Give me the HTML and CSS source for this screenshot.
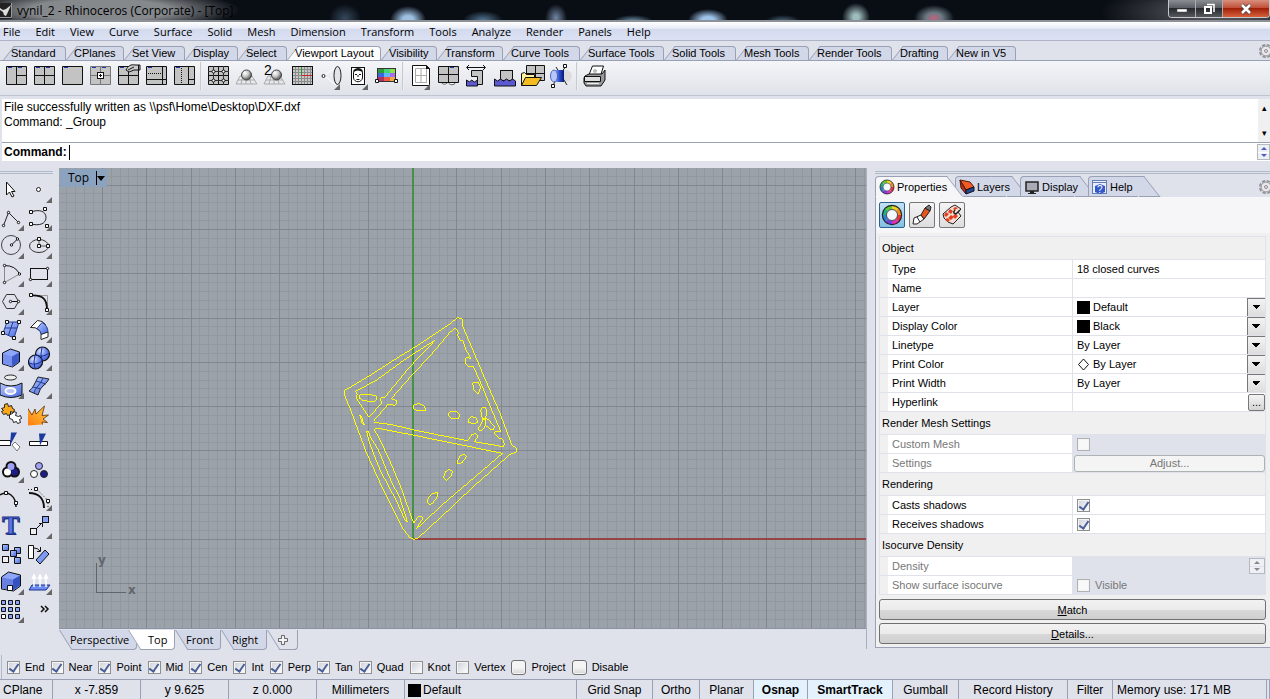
FILE: index.html
```html
<!DOCTYPE html>
<html lang="en">
<head>
  <meta charset="UTF-8">
  <title>vynil_2 - Rhinoceros (Corporate) - [Top]</title>
  <link rel="stylesheet" href="styles.css">
</head>
<body>

  <!-- Shared gradients and symbols -->
  <svg class="defs" width="0" height="0">
    <defs>
      <linearGradient id="blue" x1="0" y1="0" x2="1" y2="1"><stop offset="0" stop-color="#b9cbff"/><stop offset="1" stop-color="#4566dc"/></linearGradient>
      <radialGradient id="ball" cx=".35" cy=".3" r=".7"><stop offset="0" stop-color="#fff"/><stop offset=".5" stop-color="#c8c8c8"/><stop offset="1" stop-color="#555"/></radialGradient>
      <radialGradient id="blueball" cx=".35" cy=".3" r=".8"><stop offset="0" stop-color="#dbe5ff"/><stop offset=".5" stop-color="#6f8cf0"/><stop offset="1" stop-color="#3453c8"/></radialGradient>
      <linearGradient id="fire" x1="0" y1="1" x2="1" y2="0"><stop offset="0" stop-color="#ff7a10"/><stop offset="1" stop-color="#ffd040"/></linearGradient>
      <linearGradient id="barrel"><stop offset="0" stop-color="#b8ccff"/><stop offset=".5" stop-color="#2f52d8"/><stop offset="1" stop-color="#081a70"/></linearGradient>
    </defs>
    <symbol id="tri" viewBox="0 0 28 28"><path d="M24 22v6h-6z" fill="#666"/></symbol>
    <symbol id="wheel" viewBox="0 0 16 16">
      <g fill="none" stroke-width="3">
        <path d="M8 2.5A5.5 5.5 0 0 1 12 4" stroke="#f0d020"/>
        <path d="M12 4A5.5 5.5 0 0 1 13.5 8" stroke="#f08a20"/>
        <path d="M13.5 8A5.5 5.5 0 0 1 12 12" stroke="#e83040"/>
        <path d="M12 12A5.5 5.5 0 0 1 8 13.5" stroke="#e030b0"/>
        <path d="M8 13.5A5.5 5.5 0 0 1 4 12" stroke="#7040e0"/>
        <path d="M4 12A5.5 5.5 0 0 1 2.5 8" stroke="#3080d0"/>
        <path d="M2.5 8A5.5 5.5 0 0 1 4 4" stroke="#20b080"/>
        <path d="M4 4A5.5 5.5 0 0 1 8 2.5" stroke="#60c830"/>
      </g>
      <circle cx="8" cy="8" r="7" fill="none" stroke="#222" stroke-width=".8"/>
      <circle cx="8" cy="8" r="4" fill="#f4f8ff" stroke="#333" stroke-width=".6"/>
    </symbol>
    <symbol id="gear" viewBox="0 0 16 16">
      <circle cx="8" cy="8" r="6.3" fill="none" stroke="#8c8c90" stroke-width="1.5" stroke-dasharray="3.3 1.65"/>
      <circle cx="8" cy="8" r="5" fill="#e8e8ec" stroke="#8c8c90"/>
      <circle cx="8" cy="8" r="1.5" fill="none" stroke="#8c8c90"/>
    </symbol>
    <symbol id="panes" viewBox="0 0 28 28"><path d="M4.5 4.5h20v18h-20zM14.5 4.5v18M4.5 13.5h20" fill="#c3c3c3" stroke="#111"/><path d="M6 5.5h4M16 5.5h4" stroke="#2036a8"/></symbol>
  </svg>

  <!-- Title bar -->
  <header class="titlebar">
    <svg class="app-icon" width="12" height="16" viewBox="0 0 12 16"><rect width="12" height="16" fill="#222"/><path d="M0 5l3 2 3-1 5-4-3 7-2 4-2-1-1-3-3-2z" fill="#ddd"/><path d="M0 14.5h11.5V0" fill="none" stroke="#999"/></svg>
    <span class="title">vynil_2 - Rhinoceros (Corporate) - [Top]</span>
    <div class="window-buttons">
      <button class="win-btn" aria-label="Minimize"><svg width="12" height="12"><rect x="1" y="6" width="10" height="3" fill="#fff" stroke="#444" stroke-width=".5"/></svg></button>
      <button class="win-btn" aria-label="Restore"><svg width="12" height="12" fill="none" stroke="#fff"><path d="M4 1.5h7V9" stroke-width="1.5"/><rect x="2" y="4" width="6" height="6" stroke-width="2"/></svg></button>
      <button class="win-btn win-close" aria-label="Close"><svg width="14" height="12"><path d="M3 2l8 8M11 2l-8 8" stroke="#444" stroke-width="4"/><path d="M3 2l8 8M11 2l-8 8" stroke="#fff" stroke-width="2.500"/></svg></button>
    </div>
  </header>

  <!-- Menu -->
  <nav class="menu">
    <a href="#">File</a><a href="#">Edit</a><a href="#">View</a><a href="#">Curve</a><a href="#">Surface</a><a href="#">Solid</a><a href="#">Mesh</a><a href="#">Dimension</a><a href="#">Transform</a><a href="#">Tools</a><a href="#">Analyze</a><a href="#">Render</a><a href="#">Panels</a><a href="#">Help</a>
  </nav>

  <!-- Toolbar tabs -->
  <div class="tab-row">
    <div class="tabs">
      <button class="tab">Standard</button>
      <button class="tab">CPlanes</button>
      <button class="tab">Set View</button>
      <button class="tab">Display</button>
      <button class="tab">Select</button>
      <button class="tab active">Viewport Layout</button>
      <button class="tab">Visibility</button>
      <button class="tab">Transform</button>
      <button class="tab">Curve Tools</button>
      <button class="tab">Surface Tools</button>
      <button class="tab">Solid Tools</button>
      <button class="tab">Mesh Tools</button>
      <button class="tab">Render Tools</button>
      <button class="tab">Drafting</button>
      <button class="tab">New in V5</button>
    </div>
    <button class="gear" aria-label="Toolbar options"><svg width="16" height="16"><use href="#gear"/></svg></button>
  </div>

  <!-- Toolbar -->
  <div class="toolbar">
    <button class="tool" aria-label="3 viewports"><svg viewBox="0 0 28 28"><path d="M4.5 4.5h20v18h-20zM14.5 4.5v18M14.5 13.5h10" fill="#c3c3c3" stroke="#111"/><path d="M6 5.5h4M16 5.5h4" stroke="#2036a8"/></svg></button>
    <button class="tool" aria-label="4 viewports"><svg viewBox="0 0 28 28"><use href="#panes"/></svg></button>
    <button class="tool" aria-label="Maximize viewport"><svg viewBox="0 0 28 28"><path d="M4.5 4.5h20v18h-20z" fill="#c3c3c3" stroke="#111"/><path d="M6 5.5h4" stroke="#2036a8"/></svg></button>
    <button class="tool" aria-label="Link viewports"><svg viewBox="0 0 28 28"><path d="M4.5 4.5h20v18h-20zM14.5 4.5v18M4.5 13.5h20" fill="#c3c3c3" stroke="#777"/><path d="M6 5.5h4M16 5.5h4" stroke="#2036a8"/><rect x="11.5" y="10.5" width="6" height="6" fill="#fff" stroke="#111"/><path d="M14.5 12v3M13 13.5h3" stroke="#111"/></svg></button>
    <button class="tool" aria-label="Viewport properties"><svg viewBox="0 0 28 28"><use href="#panes"/><path d="M12 8c2-4 5-6 9-5h5v5h-6l-5 2z" fill="#ccc" stroke="#111"/><path d="M14 8l6-3M24.500 3v5" stroke="#111"/></svg></button>
    <button class="tool" aria-label="Split horizontal"><svg viewBox="0 0 28 28"><path d="M4.5 4.5h20v18h-20zM20.5 4.5v18M4.5 17.5h20" fill="#c3c3c3" stroke="#111"/><path d="M6 11.5h13" stroke="#111" stroke-dasharray="1 1"/><path d="M6 5.5h4" stroke="#2036a8"/></svg></button>
    <button class="tool" aria-label="Split vertical"><svg viewBox="0 0 28 28"><path d="M4.5 4.5h20v18h-20zM18.5 4.5v18M18.5 17.5h6" fill="#c3c3c3" stroke="#111"/><path d="M11.5 6v15" stroke="#111" stroke-dasharray="1 1"/><path d="M6 5.5h4" stroke="#2036a8"/></svg></button>
    <span class="sep"></span>
    <button class="tool" aria-label="Grid snap"><svg viewBox="0 0 28 28"><rect x="4.5" y="4.5" width="20" height="18" fill="#c3c3c3"/><path d="M4.5 4.5h20v18h-20zM14.5 4v19M4 13.5h21" fill="none" stroke="#111"/><path d="M9.5 4v19M19.5 4v19M4 9.5h21M4 18.5h21" stroke="#333"/><g fill="#fff" stroke="#111"><circle cx="9.500" cy="9.500" r="1.500"/><circle cx="19.500" cy="9.500" r="1.500"/><circle cx="9.500" cy="18.500" r="1.500"/><circle cx="19.500" cy="18.500" r="1.500"/></g></svg></button>
    <button class="tool" aria-label="Perspective match"><svg viewBox="0 0 28 28"><path d="M8 14L4 22h21l-5-8zM6 18h17M11 14l-2 8M17 14l2 8M14 14v8" fill="none" stroke="#aaa"/><circle cx="14.5" cy="13" r="5" fill="url(#ball)" stroke="#444"/></svg></button>
    <button class="tool" aria-label="Two-point perspective"><svg viewBox="0 0 28 28"><path d="M8 14L4 22h21l-5-8zM6 18h17M11 14l-2 8M17 14l2 8M14 14v8" fill="none" stroke="#aaa"/><circle cx="16.5" cy="13" r="5" fill="url(#ball)" stroke="#444"/><text x="4" y="13" font-size="14">2</text></svg></button>
    <button class="tool" aria-label="Grid"><svg viewBox="0 0 28 28"><rect x="4.5" y="4.5" width="20" height="18" fill="#c8c8c8" stroke="#111"/><path d="M7.5 5v17M10.5 5v17M13.5 5v17M16.5 5v17M19.5 5v17M22.5 5v17M5 7.5h19M5 10.5h19M5 13.5h19M5 16.5h19M5 19.5h19" stroke="#8a8a8a"/><path d="M13.5 5v8" stroke="#1a9a1a"/><path d="M13.500 13.500H24" stroke="#c22"/></svg></button>
    <button class="tool" aria-label="Camera"><svg viewBox="0 0 28 28"><path d="M8 13.5L20 5M8 13.5L20 23" stroke="#fff"/><circle cx="7.5" cy="14" r="1.5" fill="#fff" stroke="#222"/><ellipse cx="21.5" cy="13.5" rx="3.5" ry="9" fill="#e4e4e8" stroke="#222"/><use href="#tri"/></svg></button>
    <button class="tool" aria-label="Picture"><svg viewBox="0 0 28 28"><rect x="7.5" y="5.500" width="13" height="17" fill="#fff" stroke="#111"/><path d="M9.500 11c0-5 9-5 9 0v5c-1 5-8 5-9 0z" fill="none" stroke="#111"/><path d="M9.500 10q4-3 9 0V8q-4-4-9 0z" fill="#111"/><path d="M11 12.500h2M15 12.500h2M14 13v2M12.500 17.500h3" stroke="#111"/><use href="#tri"/></svg></button>
    <button class="tool" aria-label="Wallpaper"><svg viewBox="0 0 28 28"><rect x="5" y="6" width="19" height="14" fill="#333"/><path d="M6 7h6v4H6z" fill="#2e9b3c"/><path d="M12 7h6v4h-6z" fill="#45d47a"/><path d="M18 7h5v4h-5z" fill="#8be04c"/><path d="M6 11h6v4H6z" fill="#3d68dc"/><path d="M12 11h6v4h-6z" fill="#66b5fa"/><path d="M18 11h5v4h-5z" fill="#a56ef0"/><path d="M6 15h6v4H6z" fill="#b03060"/><path d="M12 15h6v4h-6z" fill="#ef5a48"/><path d="M18 15h5v4h-5z" fill="#f0a840"/><path d="M3.5 17.5h3v3h-3zM22.5 17.5h3v3h-3z" fill="#fff" stroke="#111"/></svg></button>
    <span class="sep"></span>
    <button class="tool" aria-label="New layout"><svg viewBox="0 0 28 28"><path d="M6.5 3.5h14l3 3v17h-17z" fill="#fff" stroke="#111"/><path d="M9.5 6.5h11v14h-11zM15 6.5v14M9.5 13.5h11" fill="none" stroke="#aaa"/><path d="M20 3v4h4" fill="#111"/><use href="#tri"/></svg></button>
    <button class="tool" aria-label="Copy layout"><svg viewBox="0 0 28 28"><path d="M7 19c1 5 6 3 7 1 1 3 6 4 8 0" fill="#fff" stroke="#555"/><path d="M4.5 4.5h20v16h-20zM14.5 4.5v16M4.5 12.5h20" fill="#c3c3c3" stroke="#111"/><path d="M16 5.5h4" stroke="#2036a8"/></svg></button>
    <button class="tool" aria-label="Scale detail"><svg viewBox="0 0 28 28"><path d="M9.5 8.5h11v14h-5v-8h-6z" fill="#c3c3c3" stroke="#111"/><path d="M5 5.500h18M7 3L4.500 5.500 7 8M21 3l2.500 2.500L21 8" fill="none" stroke="#111"/><path d="M4.5 24v-6l3 2 2-2 3 2 3-2v6z" fill="#5b58d0" stroke="#111"/></svg></button>
    <button class="tool" aria-label="Lock detail"><svg viewBox="0 0 28 28"><rect x="10.5" y="8.5" width="12" height="10" fill="#c3c3c3" stroke="#111"/><path d="M4.5 24v-7l3 2 3-2 3 2 3-2 3 2 3-2 3 2v5z" fill="#5b58d0" stroke="#111"/></svg></button>
    <button class="tool" aria-label="Open layout"><svg viewBox="0 0 28 28"><path d="M8.5 3.5h18v15h-18zM17.5 3.5v15M8.5 11.5h18" fill="#c3c3c3" stroke="#111"/><path d="M3.5 23.5v-12l3-1 2 2h8v3" fill="#fff0a0" stroke="#111"/><path d="M3.5 23.5l4-8h16l-5 8z" fill="#f5bc22" stroke="#111"/></svg></button>
    <button class="tool" aria-label="Detail view"><svg viewBox="0 0 28 28"><circle cx="20" cy="14" r="6" fill="#ddd"/><path d="M7 23L20 4M10 5l11 18" stroke="#222"/><path d="M8 8h10v12H8z" fill="url(#barrel)"/><ellipse cx="8" cy="14" rx="3.5" ry="6" fill="#b4c6fa" stroke="#5366ac"/><path d="M17.5 2.5h3v3h-3zM5.5 22.5h3v3h-3z" fill="#fff" stroke="#111"/></svg></button>
    <span class="sep"></span>
    <button class="tool" aria-label="Print"><svg viewBox="0 0 28 28"><path d="M8.5 14l4-10h11l-3 10z" fill="#fff" stroke="#111"/><path d="M5 14l4-2h13l3-4v10l-4 6H6l-2-3v-5z" fill="#999" stroke="#111"/><path d="M4.5 14.5h16v5h-16z" fill="#ddd" stroke="#111"/><path d="M7 21.5h12" stroke="#eee"/><circle cx="15" cy="9" r="2" fill="#bbb"/></svg></button>
  </div>

  <!-- Command history and prompt -->
  <section class="command">
    <div class="history">
      <div class="history-text"><p>File successfully written as \\psf\Home\Desktop\DXF.dxf</p><p>Command: _Group</p></div>
      <div class="scroll"><span>&#9652;</span><span>&#9662;</span></div>
    </div>
    <div class="prompt">
      <label for="cmd">Command:</label>
      <span class="caret"></span>
      <input id="cmd" type="text">
      <div class="spin"><button aria-label="Up"></button><button class="down" aria-label="Down"></button></div>
    </div>
  </section>

  <main class="workspace">

    <!-- Side tools -->
    <aside class="side">
      <div class="grip"></div>
      <div class="side-tools">
        <button class="tool" aria-label="Select"><svg viewBox="0 0 28 28"><path d="M6.5 7v13l3-3 2.5 5 2-1-2.5-4.5H15z" fill="#fff" stroke="#111"/></svg></button>
        <button class="tool" aria-label="Point"><svg viewBox="0 0 28 28"><circle cx="10.5" cy="14.5" r="2" fill="#fff" stroke="#222"/><use href="#tri"/></svg></button>

        <button class="tool" aria-label="Polyline"><svg viewBox="0 0 28 28"><path d="M3.5 22.5L8.5 9.5l10 10" fill="none" stroke="#222"/><g fill="#fff" stroke="#111"><circle cx="3.5" cy="22.5" r="1.2"/><circle cx="8.5" cy="9.5" r="1.2"/><circle cx="18.5" cy="19.5" r="1.2"/></g><use href="#tri"/></svg></button>
        <button class="tool" aria-label="Curve"><svg viewBox="0 0 28 28"><path d="M3 9C11 6 18 8 18 14.5S11 23 3 21" fill="none" stroke="#222"/><use href="#tri"/><path d="M1.5 7.5h3v3h-3zM15.5 4.5h3v3h-3zM1.5 19.5h3v3h-3zM17.5 21.5h3v3h-3z" fill="#fff" stroke="#111"/></svg></button>

        <button class="tool" aria-label="Circle"><svg viewBox="0 0 28 28"><circle cx="11" cy="14" r="9.5" fill="none" stroke="#444"/><path d="M11.5 14l6-6" stroke="#111"/><g fill="#fff" stroke="#111"><circle cx="11.5" cy="14" r="1.2"/><circle cx="17.5" cy="8" r="1.2"/></g><use href="#tri"/></svg></button>
        <button class="tool" aria-label="Ellipse"><svg viewBox="0 0 28 28"><ellipse cx="11" cy="15" rx="9.5" ry="6.5" fill="none" stroke="#333"/><path d="M11 8v7h9" fill="none" stroke="#555"/><path d="M9.5 6.5h3v3h-3zM9.5 13.5h3v3h-3zM18.5 13.5h3v3h-3z" fill="#fff" stroke="#111"/><use href="#tri"/></svg></button>

        <button class="tool" aria-label="Arc"><svg viewBox="0 0 28 28"><path d="M4.5 6.5v17l15-8.5" fill="none" stroke="#888"/><path d="M4.5 6.5q11 0 15 8.5" fill="none" stroke="#111"/><g fill="#fff" stroke="#111"><circle cx="4.5" cy="6.5" r="1.2"/><circle cx="4.5" cy="23.5" r="1.2"/><circle cx="19.5" cy="15" r="1.2"/></g><use href="#tri"/></svg></button>
        <button class="tool" aria-label="Rectangle"><svg viewBox="0 0 28 28"><rect x="2.5" y="9.5" width="17" height="11" fill="none" stroke="#111"/><g fill="#fff" stroke="#111"><circle cx="19.5" cy="9.5" r="1.2"/><circle cx="2.5" cy="20.5" r="1.2"/></g><use href="#tri"/></svg></button>

        <button class="tool" aria-label="Polygon"><svg viewBox="0 0 28 28"><path d="M2.5 14.5l4-7h8l4 7-4 7h-8z" fill="none" stroke="#333"/><path d="M10.5 14.5h8" stroke="#111"/><g fill="#fff" stroke="#111"><circle cx="10.5" cy="14.5" r="1.2"/><circle cx="18.5" cy="14.5" r="1.2"/></g><use href="#tri"/></svg></button>
        <button class="tool" aria-label="Fillet"><svg viewBox="0 0 28 28"><path d="M3 8.5h16.5V23" fill="none" stroke="#999"/><path d="M3 8.500C15 8 19 12 19 23" fill="none" stroke="#111" stroke-width="1.800"/><use href="#tri"/><path d="M1.500 6.500h3v3h-3zM17.500 21.500h3v3h-3z" fill="#fff" stroke="#111"/></svg></button>

        <button class="tool" aria-label="Surface"><svg viewBox="0 0 28 28"><path d="M7 7h12l-5 16L3 18z" fill="url(#blue)" stroke="#223a90"/><path d="M13 7L8.5 20M5 13h12" stroke="#223a90"/><path d="M5.5 5.5h3v3h-3zM17.5 5.5h3v3h-3zM1.5 16.5h3v3h-3zM12.5 21.5h3v3h-3z" fill="#fff" stroke="#111"/><use href="#tri"/></svg></button>
        <button class="tool" aria-label="Sweep"><svg viewBox="0 0 28 28"><path d="M2.500 12.500l7-7q5 0 8 4l-6 6q-4-4-9-3z" fill="#fff" stroke="#222"/><path d="M14 7.500q6 3 6 10l-7 2q0-4-4-6z" fill="url(#blue)" stroke="#223a90"/><path d="M20 17v5l-7 2.500v-5z" fill="#fff" stroke="#222"/><use href="#tri"/></svg></button>

        <button class="tool" aria-label="Box"><svg viewBox="0 0 28 28"><path d="M2.5 10l8-4 9 3v10l-7 5-10-3z" fill="#8da6fa" stroke="#111"/><path d="M3 10.500l9 3v10l-9-3z" fill="#7891ee"/><path d="M12 13.500l7-4v9.500l-7 4.500z" fill="#3d5bc8"/><use href="#tri"/></svg></button>
        <button class="tool" aria-label="Spheres"><svg viewBox="0 0 28 28"><g fill="url(#blueball)" stroke="#111" stroke-width="1.2"><circle cx="14.5" cy="11" r="7"/><circle cx="7.5" cy="19" r="7"/></g><path d="M8 12q7 3 13-2M14 4q-2 7 0 14M1 20q7 3 13-2M7 12q-2 7 0 14" fill="none" stroke="#1c318c"/><use href="#tri"/></svg></button>

        <button class="tool" aria-label="Project"><svg viewBox="0 0 28 28"><ellipse cx="10.5" cy="6.5" rx="6" ry="2.5" fill="#eee" stroke="#222"/><path d="M0 12q11 6 22 0v12q-11 5-22 0z" fill="url(#blue)" stroke="#111"/><ellipse cx="10.5" cy="20" rx="5" ry="3" fill="#b8c6f8" stroke="#fff" stroke-width="2"/><use href="#tri"/></svg></button>
        <button class="tool" aria-label="Unroll"><svg viewBox="0 0 28 28"><path d="M10 6l11 2q-3 5-6 7t-5 9L1 20q3-2 5-6t4-8z" fill="url(#blue)" stroke="#222"/><path d="M15 7q-2 5-5 8t-4 7M8 10l10 3M5 16l8 2" fill="none" stroke="#223a90"/><use href="#tri"/></svg></button>

        <button class="tool" aria-label="Join"><svg viewBox="0 0 28 28"><path d="M9.500 15.500l3-1 1-2 3 1-1 3 3 1 2-1 1 3-2 1 1 3-3 1-1-2-3 1-1-3-3-1z" fill="#fff" stroke="#222"/><path d="M1.500 9.500l3-1V5.500l3-1 1 3 3-1 1 3 2 1-1 3-3-1v3l-3 1-1-2-3 1-2-3 2-1z" fill="#f9a81c" stroke="#222"/></svg></button>
        <button class="tool" aria-label="Explode"><svg viewBox="0 0 28 28"><path d="M-.500 26.500V9l4.500 7 3-6 1 5 8.500-8-2.500 9.500 6.500-.500-5.500 4 4.500 3.500-5.500-.500.500 2.500z" fill="url(#fire)"/><path d="M-.500 9l4.500 7 3-6 1 5 8.500-8-2.500 9.500 6.500-.500-5.500 4 4.500 3.500-5.500-.500.500 2.500" fill="none" stroke="#5a2a00" stroke-width=".8"/></svg></button>

        <button class="tool" aria-label="Trim"><svg viewBox="0 0 28 28"><path d="M-1 13.500h11.500v5H-1z" fill="#fff" stroke="#111"/><path d="M11 5.500h6l-7 13z" fill="#1d3b9c"/><path d="M15 15l5 5-3 4-5-6z" fill="#fff" stroke="#777"/></svg></button>
        <button class="tool" aria-label="Split"><svg viewBox="0 0 28 28"><path d="M1.5 14.5h18v4h-18z" fill="#fff" stroke="#111"/><path d="M11 6.500h7l-6 12z" fill="#1d3b9c"/></svg></button>

        <button class="tool" aria-label="Group"><svg viewBox="0 0 28 28"><g stroke="#111" stroke-width="3"><circle cx="11" cy="11.5" r="4"/><circle cx="7.5" cy="17" r="4"/><circle cx="14.5" cy="17" r="4"/></g><circle cx="7.5" cy="17" r="3.5" fill="#fff"/><circle cx="14.5" cy="17" r="3.5" fill="#1c1c86"/><circle cx="11" cy="11.5" r="3.5" fill="#a0a0f4"/><use href="#tri"/></svg></button>
        <button class="tool" aria-label="Ungroup"><svg viewBox="0 0 28 28"><g stroke="#222"><circle cx="11" cy="11" r="3.5" fill="#a0a0f4"/><circle cx="6" cy="19" r="3.5" fill="#fff"/><circle cx="16" cy="19" r="3.5" fill="#1c1c86"/></g></svg></button>

        <button class="tool" aria-label="Edit points"><svg viewBox="0 0 28 28"><path d="M0 12Q6 8 11 12t5 12" fill="none" stroke="#111" stroke-width="1.5"/><path d="M4.5 8.5h3v3h-3zM14.5 18.5h3v3h-3z" fill="#fff" stroke="#111"/></svg></button>
        <button class="tool" aria-label="Control points"><svg viewBox="0 0 28 28"><path d="M1 10c9 0 15 5 15 15" fill="none" stroke="#111" stroke-width="2"/><path d="M0 6.5h9l11 11v8" fill="none" stroke="#111" stroke-dasharray="1 2"/><use href="#tri"/><path d="M6.5 4.5h3v3h-3zM18.5 16.5h3v3h-3z" fill="#fff" stroke="#111"/></svg></button>

        <button class="tool" aria-label="Text"><svg viewBox="0 0 28 28"><text class="t-icon" x="3" y="24" font-size="26" fill="#1b2f80">T</text><text class="t-icon" x="2" y="23" font-size="26" fill="#5578e4" stroke="#1b2f80" stroke-width=".8">T</text></svg></button>
        <button class="tool" aria-label="Move"><svg viewBox="0 0 28 28"><rect x="14.5" y="5.5" width="6" height="6" fill="#86a0f6" stroke="#111"/><rect x="2.5" y="17.5" width="6" height="6" fill="#eee" stroke="#111"/><path d="M9 17l5-5M11 12.5h3.5V16" fill="none" stroke="#111"/><use href="#tri"/></svg></button>

        <button class="tool" aria-label="Copy"><svg viewBox="0 0 28 28"><g fill="url(#blue)" stroke="#111"><path d="M2.5 5.5h6v6h-6z"/><path d="M14.5 8.5h6v6h-6z"/><path d="M10.5 11.5h6v6h-6z"/><path d="M14.5 18.5h6v6h-6z"/></g><rect x="2.5" y="17.5" width="6" height="6" fill="#eee" stroke="#111"/></svg></button>
        <button class="tool" aria-label="Rotate"><svg viewBox="0 0 28 28"><path d="M.5 6.5h5v13h-5z" fill="#fff" stroke="#111"/><path d="M6 9q4 0 6 3M12.5 8v4.5H9" fill="none" stroke="#111"/><path d="M17 11l4 4-9 10-4-4z" fill="#7f9af2" stroke="#111"/></svg></button>

        <button class="tool" aria-label="Solid edit"><svg viewBox="0 0 28 28"><path d="M1.5 10l7-5 12 3v11l-7 5-12-2z" fill="#8da6fa" stroke="#111"/><path d="M2 10.5l11 2v11l-11-2z" fill="#6680e4"/><path d="M13 12.500l7-4v10l-7 5z" fill="#3553c0"/><path d="M7.500 18.500h5v5h-5z" fill="#fff" stroke="#111"/><use href="#tri"/></svg></button>
        <button class="tool" aria-label="Direction"><svg viewBox="0 0 28 28"><path d="M4 18h18l-4 5H1z" fill="#6f8ef4" stroke="#1c318c"/><path d="M6 20V9M12 20V9M18 20V9M4 12l2-4 2 4M10 12l2-4 2 4M16 12l2-4 2 4" fill="none" stroke="#fff" stroke-width="1.5"/><use href="#tri"/></svg></button>

        <button class="tool" aria-label="Array"><svg viewBox="0 0 28 28"><path d="M1.5 5.5h4v4h-4zM8.5 5.5h4v4h-4zM15.5 5.5h4v4h-4zM1.5 12.5h4v4h-4zM8.5 12.5h4v4h-4zM15.5 12.5h4v4h-4zM8.5 19.5h4v4h-4zM15.5 19.5h4v4h-4z" fill="#8aa4f8" stroke="#111"/><path d="M1.5 19.5h4v4h-4z" fill="#fff" stroke="#111"/><use href="#tri"/></svg></button>
        <button class="tool" aria-label="More"><svg viewBox="0 0 28 28"><path d="M13 11l3 3-3 3M17 11l3 3-3 3" fill="none" stroke="#111" stroke-width="1.5"/></svg></button>
      </div>
    </aside>

    <!-- Viewport -->
    <section class="view-area">
      <div class="viewport">
        <svg class="canvas" width="100%" height="100%" shape-rendering="crispEdges">
          <rect width="100%" height="100%" fill="#9ba2aa"/>
          <path id="minor" stroke="#9198a0" fill="none"/>
          <path id="major" stroke="#82868e" fill="none"/>
          <path d="M354 0v371" stroke="#479147" stroke-width="2"/>
          <path d="M355 371H2000" stroke="#964545" stroke-width="2"/>
          <g fill="none" stroke="#ff0" stroke-width="3" transform="translate(271 132) scale(.3333)">
            <path d="M43 272L60 262 130 220 200 175 270 132 320 98 360 72 382 53 396 56 398 78 418 125 460 225 510 340 546 436 559 444 559 455 552 460 540 463 430 560 340 645 262 716 250 718 238 712 215 680 160 570 110 460 60 325 43 284z"/>
            <path d="M77 274L140 240 220 182 290 136 314 122 290 148 240 200 165 291 152 294 149 301 156 304 152 313 117 352 78 293 82 284z"/>
            <path d="M130 364L168 320 174 313 195 316 200 309 199 301 184 296 240 232 300 168 360 97 376 85 386 97 383 106 390 120 399 123 407 148 424 178"/>
            <path d="M424 178L413 171 406 177 407 190 415 199 430 199 434 208 455 255 482 322 512 394 495 395 493 400 506 413 519 419 523 434 519 440 433 425 443 410 439 401 426 403 413 422 320 404 248 389 185 374 132 367"/>
            <path d="M134 390L136 385 150 386 248 405 380 432 518 460 450 518 340 612 260 686 262 680 278 657 275 649 264 651 252 669 248 662 215 568 185 495 155 430z"/>
            <path d="M110 394L116 396 122 412 145 450 182 540 210 595 232 665 225 660 200 604 150 510 118 428z"/>
            <path d="M89 345L97 354 98 364 104 374 97 371z"/>
            <path d="M93 283h23l23 5v13l-5 4-34-3-12-7 1-8zM251 316l14-6 18 8 4 13-25 2-12-8zM354 343l8-9h18l9 12-3 10h-22zM415 358l9-8 14 4 6 12-10 5-17-3zM428 249l16-2 8 16-7 18-13-10zM452 331l5-9h9l4 12-3 21-10 1z"/>
            <path d="M468 356l9 3 6 10 11 11-4 9-10-2-13-11-9 14-11 1-2-7 11-16 1-9zM466 358v18M382 484l9-17 12-4 7 7-14 18-12 3zM342 527l6-13 10-6 10 7-5 12-13 15-9-7zM293 598l12-17 18-4v12l-16 22-9 3-6-6z"/>
          </g>
          <path d="M37.5 395v29.5H67" fill="none" stroke="#62666c"/>
          <g class="axis"><text x="39" y="396">y</text><text x="69" y="426">x</text></g>
        </svg>
        <button class="view-title"><span>Top</span><i></i></button>
      </div>
      <div class="view-tabs">
        <button class="view-tab">Perspective</button>
        <button class="view-tab active">Top</button>
        <button class="view-tab">Front</button>
        <button class="view-tab">Right</button>
        <button class="view-tab plain" aria-label="New viewport"><svg width="10" height="10"><path d="M3.5.5h3v3h3v3h-3v3h-3v-3h-3v-3h3z" fill="#f4f4f4" stroke="#666"/></svg></button>
      </div>
    </section>

    <!-- Properties panel -->
    <aside class="panel-area">
      <div class="grip"></div>
      <div class="panel-tabs">
        <button class="panel-tab active"><svg width="16" height="16"><use href="#wheel"/></svg>Properties</button>
        <button class="panel-tab"><svg width="16" height="16"><path d="M1 1l10 2 4 5-8 3z" fill="#f05a24" stroke="#501808"/><path d="M1 1l6 10v4L2 9z" fill="#b03018" stroke="#501808"/><path d="M7 11l8-3v4l-8 3z" fill="#234a90" stroke="#112"/></svg>Layers</button>
        <button class="panel-tab"><svg width="16" height="16"><rect x="2" y="3" width="12" height="9" fill="#a9acb4" stroke="#222" stroke-width="1.500"/><path d="M6 12h4v2h2v1H4v-1h2z" fill="#222"/></svg>Display</button>
        <button class="panel-tab"><svg width="16" height="16"><rect x=".5" y="1.5" width="14" height="13" fill="#e8eefc" stroke="#657db0"/><path d="M1 3.500h13" stroke="#657db0"/><path d="M3 7l5-2 5 2v6l-5 2-5-2z" fill="#3558c8"/><text x="5" y="14" font-size="10" fill="#fff">?</text></svg>Help</button>
        <button class="gear" aria-label="Panel options"><svg width="16" height="16"><use href="#gear"/></svg></button>
      </div>
      <div class="panel">
        <div class="panel-tools">
          <button class="panel-tool pressed" aria-label="Object"><svg width="22" height="22"><use href="#wheel"/></svg></button>
          <button class="panel-tool" aria-label="Material"><svg width="22" height="22"><path d="M2 20l1-6 7-3 3 4-7 5z" fill="#fff" stroke="#222"/><path d="M10 11l4-7 5 3-6 8z" fill="#e4561c" stroke="#222"/><path d="M14 4l4-3 2 2-1 4z" fill="#777" stroke="#222"/><path d="M6 13l3 5" stroke="#222"/></svg></button>
          <button class="panel-tool" aria-label="Texture mapping"><svg width="22" height="22"><path d="M2 10l8-7 4-2 6 4-3 3 3 4-8 8-5-2-4-4z" fill="#f4dcd4" stroke="#222"/><path d="M5 8l3 2-3 3-2-2zM9 5l3 2-2 3-3-2zM10 11l3 2-3 3-3-2zM14 10l3 2-3 3-2-3zM14 3l3 1-3 2-2-1zM6 14l3 2-2 2-3-2z" fill="#e2401c"/><path d="M14 6q-3 3 1 4l4-4" fill="none" stroke="#222" stroke-width="1.5"/></svg></button>
        </div>
        <table class="props">
          <colgroup><col class="c-gutter"><col class="c-label"><col></colgroup>
          <tr class="group"><th colspan="3">Object</th></tr>
          <tr><td></td><th>Type</th><td>18 closed curves</td></tr>
          <tr><td></td><th><label for="name">Name</label></th><td><input class="text" id="name" type="text"></td></tr>
          <tr><td></td><th><label for="layer">Layer</label></th><td><div class="combo"><i class="swatch"></i><select id="layer"><option>Default</option></select></div></td></tr>
          <tr><td></td><th><label for="color">Display Color</label></th><td><div class="combo"><i class="swatch"></i><select id="color"><option>Black</option></select></div></td></tr>
          <tr><td></td><th><label for="linetype">Linetype</label></th><td><div class="combo"><select id="linetype"><option>By Layer</option></select></div></td></tr>
          <tr><td></td><th><label for="pcolor">Print Color</label></th><td><div class="combo"><svg width="13" height="13"><path d="M6.5 1l5 5.5-5 5.5-5-5.5z" fill="#fff" stroke="#111"/></svg><select id="pcolor"><option>By Layer</option></select></div></td></tr>
          <tr><td></td><th><label for="pwidth">Print Width</label></th><td><div class="combo"><select id="pwidth"><option>By Layer</option></select></div></td></tr>
          <tr><td></td><th><label for="link">Hyperlink</label></th><td><div class="combo"><input class="text" id="link" type="text"><button class="more">...</button></div></td></tr>
          <tr class="group"><th colspan="3">Render Mesh Settings</th></tr>
          <tr class="off"><td></td><th><label for="mesh">Custom Mesh</label></th><td><input class="check" id="mesh" type="checkbox" disabled></td></tr>
          <tr class="off"><td></td><th>Settings</th><td><button class="wide adjust" disabled>Adjust...</button></td></tr>
          <tr class="group"><th colspan="3">Rendering</th></tr>
          <tr><td></td><th><label for="casts">Casts shadows</label></th><td><input class="check" id="casts" type="checkbox" checked></td></tr>
          <tr><td></td><th><label for="receives">Receives shadows</label></th><td><input class="check" id="receives" type="checkbox" checked></td></tr>
          <tr class="group"><th colspan="3">Isocurve Density</th></tr>
          <tr class="off"><td></td><th>Density</th><td><div class="spin gray"><button aria-label="Increase" disabled></button><button class="down" aria-label="Decrease" disabled></button></div></td></tr>
          <tr class="off"><td></td><th>Show surface isocurve</th><td><label class="inline"><input class="check" type="checkbox" disabled>Visible</label></td></tr>
        </table>
        <div class="actions">
          <button class="wide"><u>M</u>atch</button>
          <button class="wide"><u>D</u>etails...</button>
        </div>
      </div>
    </aside>
  </main>

  <!-- Object snaps -->
  <div class="osnap">
    <label><input class="check" type="checkbox" checked>End</label>
    <label><input class="check" type="checkbox" checked>Near</label>
    <label><input class="check" type="checkbox" checked>Point</label>
    <label><input class="check" type="checkbox" checked>Mid</label>
    <label><input class="check" type="checkbox" checked>Cen</label>
    <label><input class="check" type="checkbox" checked>Int</label>
    <label><input class="check" type="checkbox" checked>Perp</label>
    <label><input class="check" type="checkbox" checked>Tan</label>
    <label><input class="check" type="checkbox" checked>Quad</label>
    <label><input class="check" type="checkbox">Knot</label>
    <label><input class="check" type="checkbox">Vertex</label>
    <label><input class="check big" type="checkbox">Project</label>
    <label><input class="check big" type="checkbox">Disable</label>
  </div>

  <!-- Status bar -->
  <footer class="status">
    <button>CPlane</button>
    <span>x -7.859</span>
    <span>y 9.625</span>
    <span>z 0.000</span>
    <span>Millimeters</span>
    <button class="current-layer"><i class="swatch"></i>Default</button>
    <button>Grid Snap</button>
    <button>Ortho</button>
    <button>Planar</button>
    <button class="on">Osnap</button>
    <button class="on">SmartTrack</button>
    <button>Gumball</button>
    <button>Record History</button>
    <button>Filter</button>
    <span class="memory">Memory use: 171 MB</span>
    <span></span>
  </footer>

  <script src="script.js"></script>
</body>
</html>
```
FILE: styles.css
```css
* {
  box-sizing: border-box;
}

body {
  margin: 0;
  height: 100vh;
  display: flex;
  flex-direction: column;
  overflow: hidden;
  background: #dfe2eb;
  color: #000;
  font-family: "Liberation Sans", Arial, sans-serif;
  font-size: 12px;
}

button, input, select {
  font: inherit;
  color: inherit;
}

button {
  padding: 0;
  border: none;
  background: none;
}

svg {
  display: block;
}

.defs {
  position: absolute;
}

/* Title bar */
.titlebar {
  flex: none;
  height: 22px;
  display: flex;
  align-items: flex-start;
  border-bottom: 2px solid #8d9299;
  background:
    radial-gradient(ellipse 140px 22px at 100px 10px, #85898c 50%, transparent 100%),
    radial-gradient(ellipse 16px 14px at 345px 18px, #35485c, transparent),
    radial-gradient(ellipse 18px 14px at 408px 20px, #9cbfe2 30%, transparent),
    radial-gradient(ellipse 20px 9px at 483px 20px, #527694, transparent),
    radial-gradient(ellipse 11px 14px at 556px 18px, #7187a3, transparent),
    radial-gradient(ellipse 20px 6px at 633px 21px, #6c93ae, transparent),
    radial-gradient(ellipse 20px 11px at 708px 20px, #9fc4ea 30%, transparent),
    radial-gradient(ellipse 18px 6px at 783px 21px, #4c687b, transparent),
    radial-gradient(ellipse 14px 14px at 856px 17px, #9fbcbd 20%, transparent),
    radial-gradient(ellipse 20px 13px at 934px 18px, #ae6780 10%, #6b7a84 40%, transparent),
    radial-gradient(ellipse 120px 30px at 1220px 12px, #64666a, transparent),
    #090d14;
}

.app-icon {
  margin-top: 3px;
}

.title {
  flex: 1;
  padding-left: 5px;
  font-family: "Open Sans", "Noto Sans", sans-serif;
  font-size: 12px;
  line-height: 22px;
}

.window-buttons {
  display: flex;
  border: 1px solid #c4c8cc;
  border-top: none;
  border-radius: 0 0 4px 4px;
  overflow: hidden;
}

.win-btn {
  width: 27px;
  height: 17px;
  display: grid;
  place-items: center;
  border-right: 1px solid #aaadb2;
  background: linear-gradient(#8a8d92, #5b5e64 45%, #26292e 50%, #55585d);
}

.win-close {
  width: 46px;
  border-right: none;
  background: linear-gradient(#d8907e, #c05038 45%, #a02008 50%, #d8603c);
}

/* Menu */
.menu {
  flex: none;
  height: 19px;
  display: flex;
  gap: 15px;
  padding-left: 3px;
  border-bottom: 1px solid #aeb4c6;
  background: linear-gradient(#fff, #e8ecf7 35%, #d3daed 40%, #dce2f4);
  font-family: "Open Sans", "Noto Sans", sans-serif;
  font-size: 11px;
  line-height: 20px;
}

.menu a {
  color: #000;
  text-decoration: none;
}

/* Toolbar tabs */
.tab-row {
  flex: none;
  height: 20px;
  display: flex;
  justify-content: space-between;
  align-items: flex-end;
  border-bottom: 1px solid #9aa1b4;
  overflow: hidden;
  font-size: 11px;
}

.tabs {
  display: grid;
  grid-template-columns: 63px 58px 61px 53px 49px 94px 56px 66px 77px 84px 72px 73px 83px 56px 68px;
  margin-left: 3px;
}

.tab {
  position: relative;
  z-index: 0;
  height: 14px;
  padding-left: 8px;
  text-align: left;
  white-space: nowrap;
  line-height: 15px;
}

.tab::before, .tab::after {
  content: "";
  position: absolute;
  z-index: -1;
  top: 0;
  bottom: 0;
  border: 1px solid #9aa1b4;
  border-bottom: none;
  background: #d3d8e8;
}

.tab::before {
  left: 0;
  width: 20px;
  border-right: none;
  transform: skewX(-38deg);
  transform-origin: bottom left;
}

.tab::after {
  left: 18px;
  right: 0;
  border-left: none;
  border-radius: 0 4px 0 0;
}

.tab.active::before, .tab.active::after {
  background: #fdfdfe;
}

.gear {
  align-self: center;
  width: 12px;
  height: 16px;
  overflow: hidden;
}

/* Toolbar */
.toolbar {
  flex: none;
  height: 35px;
  display: flex;
  padding: 1px 0 0 2px;
  border-bottom: 1px solid #bfc5d0;
  background: linear-gradient(#f4f5f8, #dfe2e9);
}

.tool {
  width: 28px;
  height: 28px;
}

.tool svg {
  width: 28px;
  height: 28px;
}

.t-icon {
  font-family: "Liberation Serif", serif;
  font-weight: bold;
}

.sep {
  width: 2px;
  height: 28px;
  margin: 0 2px;
  background: linear-gradient(90deg, #b4b8c0, #fff);
}

/* Command area */
.command {
  flex: none;
  margin: 3px 0 0 2px;
  background: #fff;
}

.history {
  height: 44px;
  display: flex;
  justify-content: space-between;
  border-bottom: 1px solid #9aa1b4;
}

.history-text {
  padding: 1px 0 0 2px;
}

.history-text p {
  margin: 0;
  line-height: 15px;
}

.scroll {
  width: 12px;
  display: flex;
  flex-direction: column;
  justify-content: space-between;
  padding: 3px 0;
  background: #f0f0f0;
  font-size: 9px;
  line-height: 12px;
  text-align: center;
}

.prompt {
  height: 18px;
  display: flex;
  align-items: center;
  padding-left: 2px;
}

.prompt label {
  font-weight: bold;
}

.prompt input {
  flex: 1;
  border: none;
  outline: none;
}

.caret {
  width: 1px;
  height: 15px;
  margin-left: 2px;
  background: #000;
}

.spin {
  width: 13px;
  height: 16px;
  display: grid;
  gap: 1px;
  border: 1px solid #b4b8c0;
}

.spin button {
  display: grid;
  place-items: center;
  background: #eef0f5;
}

.spin button::before {
  content: "";
  border: 3px solid transparent;
  border-top: none;
  border-bottom: 3px solid #4a60c0;
}

.spin .down::before {
  border: 3px solid transparent;
  border-bottom: none;
  border-top: 3px solid #4a60c0;
}

/* Workspace */
.workspace {
  flex: 1;
  min-height: 0;
  display: flex;
  padding-top: 7px;
}

.grip {
  height: 3px;
  border: solid #b2b9c9;
  border-width: 1px 0;
}

.side {
  flex: none;
  width: 59px;
  padding-top: 3px;
}

.side .grip {
  width: 53px;
}

.side-tools {
  display: grid;
  grid-template-columns: 28px 28px;
  margin-top: 1px;
}

.view-area {
  flex: 1;
  min-width: 0;
  display: flex;
  flex-direction: column;
}

.viewport {
  position: relative;
  flex: 1;
  min-height: 0;
  overflow: hidden;
  border-bottom: 1px solid #8c93a4;
}

.axis {
  font-family: "DejaVu Sans", sans-serif;
  font-size: 12px;
  font-weight: bold;
  fill: #62666c;
}

.view-title {
  position: absolute;
  top: 1px;
  left: 1px;
  width: 47px;
  height: 18px;
  display: flex;
  align-items: center;
  padding-left: 8px;
  background: #8ba3bf;
  font-family: "Open Sans", "Noto Sans", sans-serif;
}

.view-title span {
  width: 29px;
  border-right: 1px solid #000;
  line-height: 14px;
  text-align: left;
}

.view-title i {
  border: 4px solid transparent;
  border-top: 5px solid #000;
  border-bottom: none;
}

.view-tabs {
  flex: none;
  display: grid;
  grid-template-columns: 78px 38px 46px 46px 31px;
  margin: 1px 0 5px;
}

.view-tab {
  position: relative;
  z-index: 0;
  height: 20px;
  padding-left: 11px;
  text-align: left;
  font-family: "Open Sans", "Noto Sans", sans-serif;
  font-size: 11px;
  line-height: 20px;
}

.view-tab::before, .view-tab::after {
  content: "";
  position: absolute;
  z-index: -1;
  top: 0;
  bottom: 0;
  border: 1px solid #9aa1b4;
  border-top: none;
  background: #d3d8e8;
}

.view-tab::before {
  left: 0;
  width: 16px;
  border-right: none;
  transform: skewX(32deg);
  transform-origin: top left;
}

.view-tab::after {
  left: 14px;
  right: 0;
  border-left: none;
  border-radius: 0 0 4px 0;
}

.view-tab.active::before, .view-tab.active::after {
  background: #fff;
}

.view-tab.active::before {
  left: -9px;
  width: 25px;
}

.view-tab.plain::before, .view-tab.plain::after {
  background: #dfe2eb;
}

/* Panel */
.panel-area {
  flex: none;
  width: 404px;
  padding: 3px 0 0 8px;
  border-left: 1px solid #aab0c0;
  margin-bottom: 6px;
}

.panel-tabs {
  display: grid;
  grid-template-columns: 80px 65px 68px 64px 1fr;
  margin-top: 2px;
  font-size: 11px;
}

.panel-tab {
  position: relative;
  z-index: 0;
  height: 21px;
  display: flex;
  align-items: center;
  gap: 2px;
  padding-left: 4px;
}

.panel-tab.active {
  z-index: 1;
}

.panel-tab::before, .panel-tab::after {
  content: "";
  position: absolute;
  z-index: -1;
  top: 0;
  bottom: 0;
  border: 1px solid #9aa1b4;
  background: #d3d8e8;
}

.panel-tab::before {
  left: 0;
  right: 14px;
  border-right: none;
  border-radius: 4px 0 0 0;
}

.panel-tab::after {
  right: 8px;
  width: 20px;
  border-left: none;
  transform: skewX(38deg);
  transform-origin: top right;
}

.panel-tab.active::before, .panel-tab.active::after {
  border-bottom-color: #f6f6f9;
  background: #f6f6f9;
}

.panel-tabs .gear {
  justify-self: end;
}

.panel {
  border: 1px solid #9aa1b4;
  border-top: none;
  border-right: none;
  padding: 5px 4px 3px 3px;
  background: linear-gradient(#f6f6f9 36px, #f0f0f0 36px);
}

.panel-tools {
  display: flex;
  gap: 4px;
  margin-bottom: 8px;
}

.panel-tool {
  width: 26px;
  height: 26px;
  display: grid;
  place-items: center;
  border: 1px solid #777;
  border-radius: 2px;
  background: linear-gradient(#f4f4f4, #ddd);
}

.panel-tool.pressed {
  border-color: #2c628b;
  background: linear-gradient(#c4e2f4, #82c0e4);
}

.props {
  width: 100%;
  table-layout: fixed;
  border-spacing: 0;
  border: 1px solid #dfe2eb;
  border-bottom: none;
  font-size: 11px;
}

.c-gutter {
  width: 8px;
}

.c-label {
  width: 184px;
}

.props th, .props td {
  height: 19px;
  padding: 0;
  border-bottom: 1px solid #dfe2eb;
  background: #fff;
  font-weight: normal;
  text-align: left;
}

.props th {
  padding-left: 4px;
}

.props td:first-child, .props .group th {
  background: #f0f0f0;
}

.props .group th {
  height: 23px;
  padding-left: 2px;
}

.props td:last-child {
  padding-left: 4px;
  border-left: 1px solid #dfe2eb;
}

.props .off {
  color: #777;
}

.props .off td:last-child {
  background: #dfe2eb;
}

.combo {
  height: 18px;
  display: flex;
  align-items: center;
  gap: 3px;
}

.combo select {
  appearance: none;
  flex: 1;
  height: 18px;
  padding: 0;
  border: none;
  background:
    conic-gradient(from -45deg at 50% 100%, #000 90deg, transparent 0) right 5px center / 8px 4px no-repeat,
    linear-gradient(#777, #777) right 17px top / 1px 18px no-repeat,
    linear-gradient(#777, #777) right top / 17px 1px no-repeat,
    linear-gradient(#f4f4f4, #ddd) right top / 17px 18px no-repeat,
    #fff;
}

.text {
  flex: 1;
  width: 100%;
  height: 16px;
  padding: 0;
  border: none;
  outline: none;
}

.swatch {
  width: 13px;
  height: 13px;
  background: #000;
}

.more {
  width: 17px;
  height: 17px;
  border: 1px solid #777;
  border-radius: 2px;
  background: linear-gradient(#f4f4f4, #d4d4d4);
  line-height: 12px;
}

.wide {
  width: 100%;
  height: 21px;
  border: 1px solid #707070;
  border-radius: 3px;
  background: linear-gradient(#f2f2f2, #ebebeb 50%, #d8d8d8 55%, #cfcfcf);
  font-size: 11px;
}

.adjust {
  display: block;
  height: 17px;
  border-color: #adb2b5;
  background: #f4f4f4;
}

.props td:last-child:has(.adjust) {
  padding-left: 1px;
}

.check {
  appearance: none;
  flex: none;
  display: grid;
  place-items: center;
  width: 13px;
  height: 13px;
  margin: 0;
  border: 1px solid #8e8f8f;
  background: linear-gradient(135deg, #ccd0d8, #fff);
  box-shadow: inset 0 0 0 1px #f4f4f4;
}

.props .check {
  display: grid;
}

.check:checked::before {
  content: "";
  width: 4px;
  height: 8px;
  margin-bottom: 1px;
  border: solid #4a5f97;
  border-width: 0 2px 2px 0;
  transform: rotate(35deg);
}

.check:disabled {
  border-color: #b1b1b1;
  background: #f8f8f8;
}

.inline {
  display: flex;
  align-items: center;
  gap: 5px;
}

.spin.gray {
  margin-left: auto;
  width: 16px;
}

.spin.gray button::before {
  border-bottom-color: #888;
}

.spin.gray .down::before {
  border-top-color: #888;
}

.actions {
  display: grid;
  gap: 3px;
  padding-top: 4px;
}

/* Object snaps */
.osnap {
  flex: none;
  height: 24px;
  display: flex;
  align-items: center;
  gap: 6px;
  margin-left: 1px;
  padding-left: 5px;
  border-left: 1px solid #b2b9c9;
  font-size: 11px;
}

.osnap label {
  display: flex;
  align-items: center;
  gap: 5px;
}

.check.big {
  width: 15px;
  height: 15px;
  border-color: #707070;
  border-radius: 3px;
  background: linear-gradient(#f4f4f4 50%, #d4d4d4);
}

/* Status bar */
.status {
  flex: none;
  height: 20px;
  display: grid;
  grid-template-columns: 53px 88px 88px 88px 88px 1fr 76px 47px 54px 54px 85px 66px 109px 45px 154px 3px;
  border-top: 1px solid #9aa1b4;
  line-height: 20px;
  text-align: center;
  white-space: nowrap;
}

.status > * {
  border-right: 1px solid #9aa1b4;
}

.status > :first-child {
  padding-left: 3px;
  text-align: left;
}

.status .current-layer {
  display: flex;
  align-items: center;
  gap: 2px;
  padding-left: 3px;
}

.status .on {
  background: #e3f2fc;
  font-weight: bold;
}

.status .memory {
  padding-left: 4px;
  text-align: left;
}
```
FILE: script.js
```javascript
// construction plane grid, one major line every 5 units
const ORIGIN_X = 354;
const ORIGIN_Y = 371;
const STEP = 8.86;

let minor = '';
let major = '';

for (let i = -60; i <= 200; i++) {
  const x = Math.round(ORIGIN_X + i * STEP) - 0.5;
  const y = Math.round(ORIGIN_Y + i * STEP) + 0.5;
  const line = `M${x} 0V2000M0 ${y}H3000`;
  if (i % 5 === 0) {
    major += line;
  } else {
    minor += line;
  }
}

document.getElementById('minor').setAttribute('d', minor);
document.getElementById('major').setAttribute('d', major);
```
